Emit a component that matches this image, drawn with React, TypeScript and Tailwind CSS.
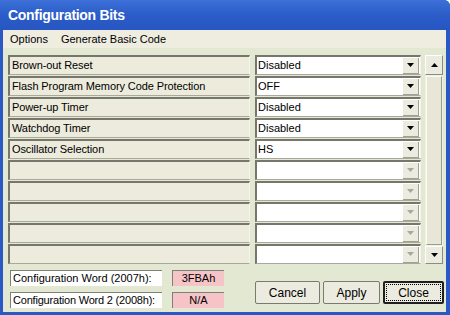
import React from "react";

const rows: { label: string; value: string }[] = [
  { label: "Brown-out Reset", value: "Disabled" },
  { label: "Flash Program Memory Code Protection", value: "OFF" },
  { label: "Power-up Timer", value: "Disabled" },
  { label: "Watchdog Timer", value: "Disabled" },
  { label: "Oscillator Selection", value: "HS" },
  { label: "", value: "" },
  { label: "", value: "" },
  { label: "", value: "" },
  { label: "", value: "" },
  { label: "", value: "" },
];

function Arrow({ up = false, gray = false }: { up?: boolean; gray?: boolean }) {
  return (
    <svg width="7" height="4" viewBox="0 0 7 4">
      <polygon points={up ? "0,4 7,4 3.5,0" : "0,0 7,0 3.5,4"} fill={gray ? "#a8a89c" : "#000"} />
    </svg>
  );
}

export default function App() {
  return (
    <div
      className="w-[450px] h-[315px] bg-[#2a58c4] flex flex-col overflow-hidden rounded-tr-[6px]"
      style={{ fontFamily: '"Liberation Sans", Arial, sans-serif' }}
    >
      <div className="h-[30px] shrink-0 bg-gradient-to-b from-[#3d70d8] via-[#2b5cc8] to-[#2756c2] flex items-center pl-[8px]">
        <span className="text-white text-[14px] font-bold tracking-[-0.3px]">Configuration Bits</span>
      </div>
      <div className="flex-1 flex flex-col ml-[3px] mr-[4px] mb-[3px]">
        <div className="h-[18px] shrink-0 bg-[#efede0] flex items-center text-[11px] text-black pl-[7px] gap-[13px]">
          <span>Options</span>
          <span>Generate Basic Code</span>
        </div>
        <div className="flex-1 bg-[#e3e8d2] flex flex-col pl-[5px] pt-[7px]">
          <div className="flex">
            <div className="flex flex-col gap-[1px]">
              {rows.map((r, i) => (
                <div key={i} className="flex h-[20px]">
                  <div className="w-[242px] h-[20px] bg-[#ecebdc] border-t-2 border-l-2 border-b border-r border-t-[#76766c] border-l-[#76766c] border-b-[#a8a89c] border-r-[#f4f4ea] flex items-center pl-[2px] text-[11px] text-black leading-none tracking-[-0.1px] whitespace-nowrap">
                    {r.label}
                  </div>
                  <div className="ml-[5px] w-[166px] h-[20px] bg-white border-t-2 border-l-2 border-b border-r border-t-[#76766c] border-l-[#76766c] border-b-[#a8a89c] border-r-[#f4f4ea] flex items-center">
                    <span className="flex-1 pl-[1px] text-[11px] text-black leading-none">{r.value}</span>
                    <div className="w-[16px] h-[16px] bg-[#ecebe0] border-r border-b border-r-[#a0a094] border-b-[#a0a094] flex items-center justify-center mr-[1px]">
                      <Arrow gray={!r.value} />
                    </div>
                  </div>
                </div>
              ))}
            </div>
            <div className="ml-[4px] w-[18px] h-[209px] bg-[#f1f0e6] flex flex-col">
              <div className="h-[20px] bg-[#ecebe0] border border-t-white border-l-white border-r-[#8c8c80] border-b-[#8c8c80] flex items-center justify-center">
                <Arrow up />
              </div>
              <div className="flex-1 mx-[1px] my-[1px] bg-[#e8e6d6] border border-t-[#fbfbf4] border-l-[#fbfbf4] border-r-[#9c9c90] border-b-[#9c9c90]" />
              <div className="h-[18px] bg-[#ecebe0] border border-t-white border-l-white border-r-[#8c8c80] border-b-[#8c8c80] flex items-center justify-center">
                <Arrow />
              </div>
            </div>
          </div>
          <div className="flex mt-[6px]">
            <div className="flex flex-col gap-[6px] ml-[2px]">
              <div className="flex items-center">
                <div className="w-[152px] h-[16px] bg-white border-t border-l border-t-[#808078] border-l-[#808078] flex items-center pl-[2px] text-[11px] text-black leading-none whitespace-nowrap">
                  Configuration Word (2007h):
                </div>
                <div className="ml-[10px] w-[52px] h-[16px] bg-[#f6c3c6] border-t border-l border-t-[#808078] border-l-[#808078] flex items-center justify-center text-[11px] text-black leading-none">
                  3FBAh
                </div>
              </div>
              <div className="flex items-center">
                <div className="w-[152px] h-[16px] bg-white border-t border-l border-t-[#808078] border-l-[#808078] flex items-center pl-[2px] text-[11px] text-black leading-none whitespace-nowrap tracking-[-0.2px]">
                  Configuration Word 2 (2008h):
                </div>
                <div className="ml-[10px] w-[52px] h-[16px] bg-[#f6c3c6] border-t border-l border-t-[#808078] border-l-[#808078] flex items-center justify-center text-[11px] text-black leading-none">
                  N/A
                </div>
              </div>
            </div>
            <div className="flex gap-[3px] ml-[31px] mt-[11px]">
              <div className="w-[65px] h-[23px] bg-[#ecebe0] border border-[#7a7a70] rounded-[2px] flex items-center justify-center text-[12px] text-black">
                Cancel
              </div>
              <div className="w-[57px] h-[23px] bg-[#ecebe0] border border-[#7a7a70] rounded-[2px] flex items-center justify-center text-[12px] text-black">
                Apply
              </div>
              <div className="w-[61px] h-[23px] bg-[#ecebe0] border-2 border-[#202020] rounded-[2px] flex items-center justify-center p-[1px]">
                <div className="w-full h-full border border-dotted border-black flex items-center justify-center text-[12px] text-black">
                  Close
                </div>
              </div>
            </div>
          </div>
        </div>
      </div>
    </div>
  );
}
